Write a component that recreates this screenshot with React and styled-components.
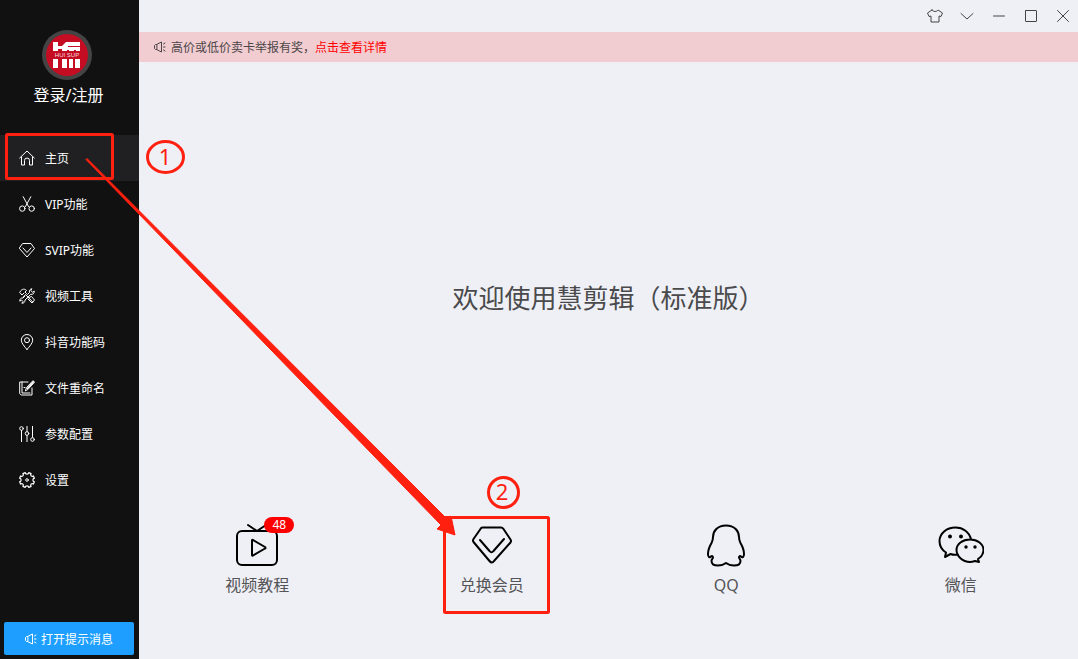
import React from "react";
import styled, { createGlobalStyle } from "styled-components";

const GlobalStyle = createGlobalStyle`
  * { box-sizing: border-box; }
  body {
    margin: 0;
    background: #eff0f6;
    font-family: "Noto Sans", "Noto Sans CJK SC", sans-serif;
  }
  button { font: inherit; border: 0; padding: 0; background: none; color: inherit; cursor: pointer; }
`;

const Window = styled.div`
  position: relative;
  display: flex;
  min-height: 100vh;
`;

const Sidebar = styled.aside`
  flex: 0 0 139px;
  display: flex;
  flex-direction: column;
  background: #111111;
  color: #ffffff;
`;

const Account = styled.button`
  display: flex;
  flex-direction: column;
  align-items: center;
  gap: 3px;
  margin: 30px 6px 0 0;
  height: 105px;
`;

const AccountName = styled.span`
  font-size: 16px;
  line-height: 24px;
  padding-left: 4px;
`;

const Nav = styled.nav`
  display: flex;
  flex-direction: column;
`;

const NavLink = styled.a`
  display: flex;
  align-items: center;
  gap: 10px;
  height: 46px;
  padding-left: 19px;
  background: ${(p) => (p.$active ? "#202022" : "transparent")};
  color: #ffffff;
  font-size: 12px;
  line-height: 16px;
  text-decoration: none;
`;

const NavLabel = styled.span`
  padding-top: 2px;
`;

const MessageButton = styled.button`
  display: flex;
  align-items: center;
  justify-content: center;
  gap: 4px;
  height: 33px;
  margin: auto 5px 4px 4px;
  && {
    background: #1e9fff;
    border-radius: 2px;
    color: #ffffff;
    font-size: 12px;
  }
`;

const Main = styled.main`
  flex: 1;
  min-width: 0;
  display: flex;
  flex-direction: column;
  background: #eff0f6;
`;

const TitleBar = styled.header`
  display: flex;
  justify-content: flex-end;
  height: 32px;
`;

const WindowButton = styled.button`
  display: flex;
  align-items: center;
  justify-content: center;
  width: 32px;
  height: 32px;
  && { color: #444444; }
`;

const WindowControls = styled.div`
  display: flex;
  margin-right: -1px;
`;

const Notice = styled.div`
  display: flex;
  align-items: center;
  gap: 5px;
  height: 30px;
  padding-left: 15px;
  background: #f1cdd1;
  color: #4c4648;
  font-size: 12px;
`;

const NoticeLink = styled.a`
  color: #ff0000;
  text-decoration: none;
`;

const Welcome = styled.div`
  flex: 1;
  display: flex;
  align-items: center;
  justify-content: center;
`;

const WelcomeTitle = styled.h1`
  margin: 10px 0 0;
  font-size: 26px;
  font-weight: 400;
  line-height: 36px;
  color: #4a4a4c;
`;

const Shortcuts = styled.div`
  display: grid;
  grid-template-columns: repeat(4, 1fr);
  justify-items: center;
  padding: 0 0 62px 1px;
`;

const Shortcut = styled.button`
  position: relative;
  display: flex;
  flex-direction: column;
  align-items: center;
  gap: 4px;
  && { color: #000000; }
`;

const ShortcutLabel = styled.span`
  font-size: 16px;
  line-height: 24px;
  color: #555557;
`;

const Badge = styled.span`
  position: absolute;
  top: -6px;
  right: -5px;
  width: 30px;
  border-radius: 8px;
  background: #ff0000;
  color: #ffffff;
  font-size: 12px;
  line-height: 16px;
  text-align: center;
`;

const Annotations = styled.svg`
  position: absolute;
  top: 0;
  left: 0;
  width: 100%;
  height: 100%;
  overflow: hidden;
  pointer-events: none;
`;

const StepNumber = styled.text`
  fill: #ff2010;
  font-size: 22px;
  text-anchor: middle;
`;

const LogoText = styled.text`
  fill: #f6dcdf;
  font-family: "Liberation Sans", sans-serif;
  font-size: 6px;
  text-anchor: middle;
`;

function Icon({ size = 16, stroke = 1, box = 16, children }) {
  return (
    <svg width={size} height={size} viewBox={`0 0 ${box} ${box}`} fill="none" stroke="currentColor"
      strokeWidth={stroke} strokeLinecap="round" strokeLinejoin="round" aria-hidden="true">
      {children}
    </svg>
  );
}

const Speaker = () => (
  <Icon size={12} box={12}>
    <path d="M2.500 3.500h-1l-1 1v3l1 1h1zM2.500 3.500 7.500 1v10L2.500 8.500M9.500 3l1.500-1M9.500 6h1.500M9.500 9l1.500 1" />
  </Icon>
);

const Logo = () => (
  <svg width="50" height="50" viewBox="0 0 50 50" aria-hidden="true">
    <circle cx="25" cy="25" r="25" fill="#444444" />
    <circle cx="25" cy="25" r="21" fill="#c40d23" />
    <path fill="#ffffff" d="M11 12h5v4h4l4-4h14v4H26v1h12v4h-4v-1h-2v1h-5v-1h-2v1h-5v-2h-4v2h-5zM11 29h5v9h-5zM20 29h5v9h-5zM27 29h4v9h-4zM33 29h5v9h-5z" />
    <LogoText x="25" y="27">HUI SUP</LogoText>
  </svg>
);

const navItems = [
  { label: "主页", icon: <path d="M.7 8 8 1l7.300 7M2.500 7v8h3v-4.500a2.500 2.500 0 0 1 5 0V15h3V7" /> },
  { label: "VIP功能", icon: <><path d="M4.200.7 9.500 10.500M11.800.7 6.500 10.500" /><circle cx="3.300" cy="12.600" r="2.700" /><circle cx="12.700" cy="12.600" r="2.700" /></> },
  { label: "SVIP功能", icon: <path d="M4 1.500h8l3.500 5L8 15 .5 6.500zM4 6l4 4.500L12 6" /> },
  { label: "视频工具", icon: <><path d="M6.500 6.500 13.700 14M4.500 8.500l1-1M7.500 5.500 6 4l1.500-1.500C5.500.5 3.500 1 2 2.500L.7 4.500 3 7l2-2M8.500 6.500l2-2C10 2.500 11 1 13 .8L11.700 2.500l1.800 1.700L15.200 3c.3 2.500-1.500 3.800-3.500 3.300L6 12c.2 2-1.200 3.400-3.200 3.200L4 13.500 2.500 12 .8 13.200C.7 11 2 9.700 4 10l2-2M10 9.500l2.500-1 3 3.500-2.500 3-4-4" /></> },
  { label: "抖音功能码", icon: <><path d="M8 15.500C5.500 12.500 2.300 9 2.300 6.200a5.700 5.700 0 0 1 11.400 0c0 2.800-3.200 6.300-5.700 9.300z" /><circle cx="8" cy="6.200" r="2.500" /></> },
  { label: "文件重命名", icon: <><path d="M9 2H.7v11.500l1.500 1.500H13V8M3 2v11h8M5 7.500h1" /><path d="m6.500 10.500 1-3L14 .7l1.500 1.500L9 9.300z" /><path d="M8.500 8.500 14.500 1.800" strokeWidth="1.500" /></> },
  { label: "参数配置", icon: <><path d="M2.500 4.500V16M8 0v5.500M8 9.500V16M13.500 0v11.500" /><circle cx="2.500" cy="2.500" r="1.800" /><circle cx="8" cy="7.500" r="1.800" /><circle cx="13.500" cy="13.500" r="1.800" /></> },
  { label: "设置", icon: <><path d="M6.200.6C6.500 2.600 9.500 2.600 9.800.6l2.300 1c-1.200 1.700.6 3.500 2.300 2.300l1 2.300c-2 .3-2 3.300 0 3.600l-1 2.300c-1.700-1.200-3.500.6-2.300 2.300l-2.300 1c-.3-2-3.300-2-3.600 0l-2.300-1c1.200-1.700-.6-3.500-2.300-2.300l-1-2.300c2-.3 2-3.300 0-3.600l1-2.300c1.700 1.200 3.500-.6 2.300-2.300z" strokeWidth="1.200" /><circle cx="8" cy="8" r="1.300" /></> },
];

const shortcuts = [
  {
    label: "视频教程", badge: 48,
    icon: <><rect x="3" y="8" width="40" height="34" rx="5" /><path d="M14 2l9 6 9-6M18 17.500v14.500q0 1 1 .5l12-7q1-.5 0-1.500l-12-7q-1-.5-1 .5z" /></>,
  },
  {
    label: "兑换会员",
    icon: <path d="M13.500 4.500h18.500q1.500 0 2.500 1.500l7 10.500q1 1.500 0 3L25 38q-2 3-4.500 0L4.500 19q-1-1.500 0-3l7-10Q12 4.500 13.500 4.500zM11 17l9.500 11q2 2.500 4 0L35 16" />,
  },
  {
    label: "QQ",
    icon: <path d="M23 2.500C14.500 2.500 10 8 10 14c0 3-.5 4-1.500 6C6.500 23.500 5 27 5 31c0 3 1.500 4 3 2.500 1-1 2-.5 2 1 0 1-1.500 1.500-1.500 3.500 0 3.500 3 4.500 6.500 4.500 3 0 6-1 8-2.500 2 1.500 5 2.500 8 2.500 3.500 0 6.500-1 6.500-4.500 0-2-1.500-2.500-1.500-3.500 0-1.500 1-2 2-1 1.500 1.500 3 .5 3-2.500 0-4-1.500-7.500-3.500-11C36.500 18 36 17 36 14 36 8 31.500 2.500 23 2.500z" />,
  },
  {
    label: "微信",
    icon: <><path d="M33 16.500C31.500 9 25 4.500 17.500 4.500 8.500 4.500 1.500 10.500 1.500 18c0 5 2.500 9 6.500 11.500L7 34l5.500-3c2.500 1 5 1 7.500.5M41 39l-1-3c4-2.500 5.500-6 5.500-9 0-6-6-10.500-13.500-10.500S18.500 21 18.500 27 24.500 39 32 39c2 0 3.500-.5 5-1z" /><g fill="currentColor" stroke="none"><circle cx="12" cy="13.500" r="2" /><circle cx="23" cy="13.500" r="2" /><circle cx="28" cy="24" r="1.700" /><circle cx="37" cy="24" r="1.700" /></g></>,
  },
];

export default function App() {
  return (
    <Window>
      <GlobalStyle />
      <Sidebar>
        <Account type="button">
          <Logo />
          <AccountName>登录/注册</AccountName>
        </Account>
        <Nav>
          {navItems.map((item, i) => (
            <NavLink key={item.label} href="#" $active={i === 0}>
              <Icon>{item.icon}</Icon>
              <NavLabel>{item.label}</NavLabel>
            </NavLink>
          ))}
        </Nav>
        <MessageButton type="button"><Speaker />打开提示消息</MessageButton>
      </Sidebar>
      <Main>
        <TitleBar>
          <WindowControls>
            <WindowButton type="button" aria-label="换肤">
              <Icon><path d="M5 2 .5 5l1.500 3.500L4 8v6h8V8l2 .5L15.500 5 11 2C10 4 6 4 5 2z" /></Icon>
            </WindowButton>
            <WindowButton type="button" aria-label="菜单"><Icon><path d="m2 5.500 6 5.500 6-5.500" /></Icon></WindowButton>
            <WindowButton type="button" aria-label="最小化"><Icon><path d="M2.500 8h11" /></Icon></WindowButton>
            <WindowButton type="button" aria-label="最大化"><Icon><rect x="2.500" y="2.500" width="11" height="11" rx=".5" /></Icon></WindowButton>
            <WindowButton type="button" aria-label="关闭"><Icon><path d="m2.500 2.500 11 11M13.500 2.500l-11 11" /></Icon></WindowButton>
          </WindowControls>
        </TitleBar>
        <Notice>
          <Speaker />
          <span>高价或低价卖卡举报有奖，<NoticeLink href="#">点击查看详情</NoticeLink></span>
        </Notice>
        <Welcome><WelcomeTitle>欢迎使用慧剪辑（标准版）</WelcomeTitle></Welcome>
        <Shortcuts>
          {shortcuts.map((item) => (
            <Shortcut key={item.label} type="button">
              <Icon size={46} box={46} stroke={2}>{item.icon}</Icon>
              {item.badge && <Badge>{item.badge}</Badge>}
              <ShortcutLabel>{item.label}</ShortcutLabel>
            </Shortcut>
          ))}
        </Shortcuts>
      </Main>
      <Annotations fill="none" stroke="#ff2010" strokeWidth="3">
        <rect x="6.500" y="134.500" width="106" height="44" rx="1" />
        <rect x="444.500" y="517.500" width="104" height="95" rx="1" />
        <ellipse cx="165.500" cy="157" rx="18" ry="15.500" />
        <circle cx="503.500" cy="492.500" r="15" />
        <path d="M87 158.500 447 519 451 516 455 535 437 529 441 525 86 159.500z" fill="#ff2010" stroke="#ff2010" strokeWidth="1" />
        <g stroke="none">
          <StepNumber x="165" y="165">1</StepNumber>
          <StepNumber x="502" y="500">2</StepNumber>
        </g>
      </Annotations>
    </Window>
  );
}
